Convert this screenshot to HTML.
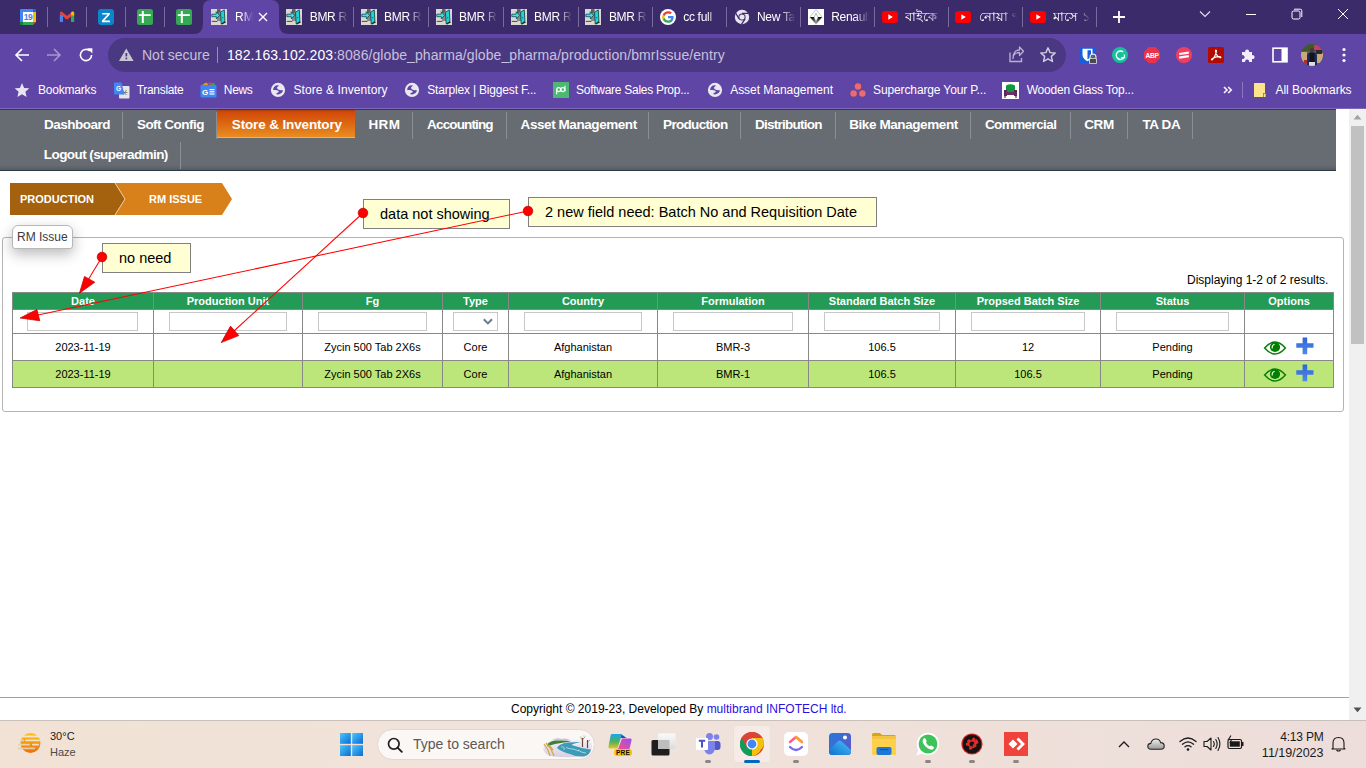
<!DOCTYPE html>
<html><head><meta charset="utf-8">
<style>
*{box-sizing:border-box}
html,body{margin:0;padding:0;width:1366px;height:768px;overflow:hidden;background:#fff;font-family:"Liberation Sans",sans-serif}
.a{position:absolute}
#tabs{left:0;top:0;width:1366px;height:34px;background:#3c2b6b}
#toolbar{left:0;top:34px;width:1366px;height:40px;background:#5f45a5}
#bm{left:0;top:74px;width:1366px;height:35px;background:#5f45a5}
#page{left:0;top:109px;width:1349px;height:611px;background:#fff;overflow:hidden}
#sb{left:1349px;top:109px;width:17px;height:611px;background:#f0f0f0}
#task{left:0;top:720px;width:1366px;height:48px;background:linear-gradient(90deg,#f2e2d5,#f0e3dc 45%,#eee0d9 75%,#eddddb)}
.sep{position:absolute;top:9px;width:1px;height:18px;background:#7a6a9e}
.tt{position:absolute;top:9px;font-size:12px;color:#fff;white-space:nowrap;overflow:hidden;line-height:16px}
.btxt{position:absolute;top:8px;font-size:12px;color:#fff;white-space:nowrap;line-height:18px}
#nav{left:0;top:0;width:1336px;height:62px;background:#676c73;border-top:1px solid #2e3e48;border-bottom:1px solid #2c3b45}
.mi{position:absolute;height:28px;line-height:28px;font-size:13.5px;font-weight:bold;color:#fff;white-space:nowrap}
.ms{position:absolute;width:1px;background:#8a8f95}
.note{position:absolute;background:#ffffd3;border:1px solid #808080;font-size:14.5px;color:#000;line-height:28px;white-space:nowrap}
table.g{position:absolute;left:12px;top:292px;border-collapse:collapse;font-size:11px}
table.g td,table.g th{border:1px solid #888;text-align:center;padding:0}
table.g th{background:#239a55;color:#fff;font-weight:bold;height:17px;line-height:15px}
table.g tr.f td{height:24px;padding:0 15px}
table.g tr.r td{height:27px}
table.g tr.r2 td{background:#bde67a}
.inp{display:block;width:100%;height:19px;border:1px solid #c8c8c8;background:#fff}
</style></head><body>
<!-- TAB STRIP -->
<div id="tabs" class="a">
<div class="sep" style="left:46.8px;top:7px;height:20px"></div>
<div class="sep" style="left:86.0px;top:7px;height:20px"></div>
<div class="sep" style="left:125.0px;top:7px;height:20px"></div>
<div class="sep" style="left:164.2px;top:7px;height:20px"></div>
<svg class="a" style="left:20px;top:9px" width="16" height="16" viewBox="0 0 16 16"><rect x="0" y="0" width="16" height="16" rx="1" fill="#4285f4"/><rect x="13" y="0" width="3" height="3" fill="#1967d2"/><rect x="3" y="3" width="10" height="10" fill="#fff"/><rect x="13" y="3" width="3" height="10" fill="#fbbc04"/><rect x="0" y="13" width="13" height="3" fill="#34a853"/><rect x="0" y="13" width="3" height="3" fill="#188038"/><polygon points="13,13 16,13 13,16" fill="#ea4335"/><polygon points="16,13 16,16 13,16" fill="#3c2b6b"/><text x="8" y="11.4" font-size="8.6" font-weight="bold" fill="#4a80e0" text-anchor="middle" font-family="Liberation Sans" letter-spacing="-0.5">19</text></svg>
<svg class="a" style="left:59px;top:11px" width="16" height="12" viewBox="0 0 16 12"><path d="M2.4 11V3.6" stroke="#4285f4" stroke-width="3.2"/><path d="M13.6 11V3.6" stroke="#34a853" stroke-width="3.2"/><path d="M2.3 2.2L8 6.8L13.7 2.2" fill="none" stroke="#ea4335" stroke-width="3" stroke-linejoin="round" stroke-linecap="round"/><path d="M12.2 1.3A1.6 1.6 0 0 1 15.2 2.3V4.6L12.2 4.6Z" fill="#fbbc04"/></svg>
<svg class="a" style="left:98px;top:9px" width="16" height="16" viewBox="0 0 16 16"><rect width="16" height="16" rx="3" fill="#0b86c8"/><path d="M4.2 4H11.8V5.6L6.3 11.6H11.9V13.2H4V11.6L9.5 5.6H4.2Z" fill="#fff"/></svg>
<svg class="a" style="left:137px;top:9px" width="16" height="16" viewBox="0 0 16 16"><rect width="16" height="16" rx="2.5" fill="#34a853"/><rect x="1.8" y="5.2" width="12" height="1.8" fill="#fff"/><rect x="4.8" y="2" width="2" height="12" fill="#fff"/></svg>
<svg class="a" style="left:176px;top:9px" width="16" height="16" viewBox="0 0 16 16"><rect width="16" height="16" rx="2.5" fill="#34a853"/><rect x="1.8" y="5.2" width="12" height="1.8" fill="#fff"/><rect x="4.8" y="2" width="2" height="12" fill="#fff"/></svg>
<svg class="a" style="left:193px;top:0" width="96" height="34" viewBox="0 0 96 34"><path d="M0 34 Q10 34 10 24 V8 Q10 0 18 0 H78 Q86 0 86 8 V24 Q86 34 96 34 Z" fill="#5f45a5"/></svg>
<svg class="a" style="left:211.0px;top:9px" width="16" height="16" viewBox="0 0 16 16"><rect width="16" height="16" fill="#d9d8d2"/><path d="M6 0.3H10V12H6Z" fill="#8a8a86"/><path d="M6 0.3H9V3L6 5Z" fill="#5c5c58"/><path d="M9.5 3.3L13.3 0.8L13.9 12.4L10.2 14.9Z" fill="#1fd3d6" stroke="#0b3f44" stroke-width="0.8" stroke-linejoin="round"/><path d="M13.9 12.4L15 13.2L11 15.6L10.2 14.9Z" fill="#111"/><circle cx="11.7" cy="8.6" r="0.6" fill="#733"/><path d="M0.8 5.2H5.2V2.7L8.6 6.3L5.4 9.9V7.7H0.8Z" fill="#38e6f0" stroke="#0c3438" stroke-width="0.7" stroke-linejoin="round"/><path d="M0.8 12.4H6.4" stroke="#3a3a3a" stroke-width="0.9"/></svg>
<div class="tt" style="left:235px;width:18px;-webkit-mask-image:linear-gradient(90deg,#000 40%,transparent)">RM Issue</div>
<svg class="a" style="left:258px;top:12px" width="10" height="10" viewBox="0 0 10 10"><path d="M1 1L9 9M9 1L1 9" stroke="#fff" stroke-width="1.4"/></svg>
<svg class="a" style="left:286.2px;top:9px" width="16" height="16" viewBox="0 0 16 16"><rect width="16" height="16" fill="#d9d8d2"/><path d="M6 0.3H10V12H6Z" fill="#8a8a86"/><path d="M6 0.3H9V3L6 5Z" fill="#5c5c58"/><path d="M9.5 3.3L13.3 0.8L13.9 12.4L10.2 14.9Z" fill="#1fd3d6" stroke="#0b3f44" stroke-width="0.8" stroke-linejoin="round"/><path d="M13.9 12.4L15 13.2L11 15.6L10.2 14.9Z" fill="#111"/><circle cx="11.7" cy="8.6" r="0.6" fill="#733"/><path d="M0.8 5.2H5.2V2.7L8.6 6.3L5.4 9.9V7.7H0.8Z" fill="#38e6f0" stroke="#0c3438" stroke-width="0.7" stroke-linejoin="round"/><path d="M0.8 12.4H6.4" stroke="#3a3a3a" stroke-width="0.9"/></svg>
<div class="tt" style="left:309.7px;width:38px;letter-spacing:-0.3px;-webkit-mask-image:linear-gradient(90deg,#000 62%,rgba(0,0,0,.35) 88%,transparent 100%)">BMR Requisition</div>
<div class="sep" style="left:353.0px;top:7px;height:20px"></div>
<svg class="a" style="left:360.5px;top:9px" width="16" height="16" viewBox="0 0 16 16"><rect width="16" height="16" fill="#d9d8d2"/><path d="M6 0.3H10V12H6Z" fill="#8a8a86"/><path d="M6 0.3H9V3L6 5Z" fill="#5c5c58"/><path d="M9.5 3.3L13.3 0.8L13.9 12.4L10.2 14.9Z" fill="#1fd3d6" stroke="#0b3f44" stroke-width="0.8" stroke-linejoin="round"/><path d="M13.9 12.4L15 13.2L11 15.6L10.2 14.9Z" fill="#111"/><circle cx="11.7" cy="8.6" r="0.6" fill="#733"/><path d="M0.8 5.2H5.2V2.7L8.6 6.3L5.4 9.9V7.7H0.8Z" fill="#38e6f0" stroke="#0c3438" stroke-width="0.7" stroke-linejoin="round"/><path d="M0.8 12.4H6.4" stroke="#3a3a3a" stroke-width="0.9"/></svg>
<div class="tt" style="left:384.0px;width:38px;letter-spacing:-0.3px;-webkit-mask-image:linear-gradient(90deg,#000 62%,rgba(0,0,0,.35) 88%,transparent 100%)">BMR Requisition</div>
<div class="sep" style="left:428.1px;top:7px;height:20px"></div>
<svg class="a" style="left:435.6px;top:9px" width="16" height="16" viewBox="0 0 16 16"><rect width="16" height="16" fill="#d9d8d2"/><path d="M6 0.3H10V12H6Z" fill="#8a8a86"/><path d="M6 0.3H9V3L6 5Z" fill="#5c5c58"/><path d="M9.5 3.3L13.3 0.8L13.9 12.4L10.2 14.9Z" fill="#1fd3d6" stroke="#0b3f44" stroke-width="0.8" stroke-linejoin="round"/><path d="M13.9 12.4L15 13.2L11 15.6L10.2 14.9Z" fill="#111"/><circle cx="11.7" cy="8.6" r="0.6" fill="#733"/><path d="M0.8 5.2H5.2V2.7L8.6 6.3L5.4 9.9V7.7H0.8Z" fill="#38e6f0" stroke="#0c3438" stroke-width="0.7" stroke-linejoin="round"/><path d="M0.8 12.4H6.4" stroke="#3a3a3a" stroke-width="0.9"/></svg>
<div class="tt" style="left:459.1px;width:38px;letter-spacing:-0.3px;-webkit-mask-image:linear-gradient(90deg,#000 62%,rgba(0,0,0,.35) 88%,transparent 100%)">BMR Requisition</div>
<div class="sep" style="left:503.1px;top:7px;height:20px"></div>
<svg class="a" style="left:510.6px;top:9px" width="16" height="16" viewBox="0 0 16 16"><rect width="16" height="16" fill="#d9d8d2"/><path d="M6 0.3H10V12H6Z" fill="#8a8a86"/><path d="M6 0.3H9V3L6 5Z" fill="#5c5c58"/><path d="M9.5 3.3L13.3 0.8L13.9 12.4L10.2 14.9Z" fill="#1fd3d6" stroke="#0b3f44" stroke-width="0.8" stroke-linejoin="round"/><path d="M13.9 12.4L15 13.2L11 15.6L10.2 14.9Z" fill="#111"/><circle cx="11.7" cy="8.6" r="0.6" fill="#733"/><path d="M0.8 5.2H5.2V2.7L8.6 6.3L5.4 9.9V7.7H0.8Z" fill="#38e6f0" stroke="#0c3438" stroke-width="0.7" stroke-linejoin="round"/><path d="M0.8 12.4H6.4" stroke="#3a3a3a" stroke-width="0.9"/></svg>
<div class="tt" style="left:534.1px;width:38px;letter-spacing:-0.3px;-webkit-mask-image:linear-gradient(90deg,#000 62%,rgba(0,0,0,.35) 88%,transparent 100%)">BMR Requisition</div>
<div class="sep" style="left:577.9px;top:7px;height:20px"></div>
<svg class="a" style="left:585.4px;top:9px" width="16" height="16" viewBox="0 0 16 16"><rect width="16" height="16" fill="#d9d8d2"/><path d="M6 0.3H10V12H6Z" fill="#8a8a86"/><path d="M6 0.3H9V3L6 5Z" fill="#5c5c58"/><path d="M9.5 3.3L13.3 0.8L13.9 12.4L10.2 14.9Z" fill="#1fd3d6" stroke="#0b3f44" stroke-width="0.8" stroke-linejoin="round"/><path d="M13.9 12.4L15 13.2L11 15.6L10.2 14.9Z" fill="#111"/><circle cx="11.7" cy="8.6" r="0.6" fill="#733"/><path d="M0.8 5.2H5.2V2.7L8.6 6.3L5.4 9.9V7.7H0.8Z" fill="#38e6f0" stroke="#0c3438" stroke-width="0.7" stroke-linejoin="round"/><path d="M0.8 12.4H6.4" stroke="#3a3a3a" stroke-width="0.9"/></svg>
<div class="tt" style="left:608.9px;width:38px;letter-spacing:-0.3px;-webkit-mask-image:linear-gradient(90deg,#000 62%,rgba(0,0,0,.35) 88%,transparent 100%)">BMR Requisition</div>
<div class="sep" style="left:652.2px;top:7px;height:20px"></div>
<svg class="a" style="left:659.7px;top:9px" width="16" height="16" viewBox="0 0 16 16"><circle cx="8" cy="8" r="8" fill="#fff"/><g transform="translate(8 8) scale(1.22) translate(-8 -8)"><path d="M12.6 8.2c0-.4 0-.7-.1-1H8v1.9h2.6c-.1.6-.5 1.1-1 1.5v1.2h1.6c.9-.9 1.4-2.1 1.4-3.6z" fill="#4285f4"/><path d="M8 12.8c1.3 0 2.4-.4 3.2-1.2L9.6 10.4c-.4.3-1 .5-1.6.5-1.3 0-2.3-.8-2.7-2H3.7v1.2C4.5 11.7 6.1 12.8 8 12.8z" fill="#34a853"/><path d="M5.3 8.9c-.2-.6-.2-1.2 0-1.8V5.9H3.7c-.7 1.3-.7 2.9 0 4.2z" fill="#fbbc05"/><path d="M8 5.1c.7 0 1.3.2 1.8.7l1.4-1.4C10.4 3.6 9.2 3.2 8 3.2 6.1 3.2 4.5 4.3 3.7 5.9l1.6 1.2C5.7 5.9 6.7 5.1 8 5.1z" fill="#ea4335"/></g></svg>
<div class="tt" style="left:683.2px;width:38px;letter-spacing:-0.3px;-webkit-mask-image:linear-gradient(90deg,#000 62%,rgba(0,0,0,.35) 88%,transparent 100%)">cc full</div>
<div class="sep" style="left:726.0px;top:7px;height:20px"></div>
<svg class="a" style="left:733.5px;top:9px" width="16" height="16" viewBox="0 0 16 16"><circle cx="8" cy="8" r="7.2" fill="#e8e4f0"/><circle cx="8" cy="8" r="3.6" fill="#3c2b6b"/><circle cx="8" cy="8" r="2.6" fill="#e8e4f0"/><path d="M8 4.4H14.6M5 9.8L1.8 4.2M11.1 9.8L7.6 15.2" stroke="#3c2b6b" stroke-width="1.3"/></svg>
<div class="tt" style="left:757.0px;width:38px;letter-spacing:-0.3px;-webkit-mask-image:linear-gradient(90deg,#000 62%,rgba(0,0,0,.35) 88%,transparent 100%)">New Tab</div>
<div class="sep" style="left:800.2px;top:7px;height:20px"></div>
<svg class="a" style="left:807.7px;top:9px" width="16" height="16" viewBox="0 0 16 16"><rect width="16" height="16" fill="#fff"/><defs><linearGradient id="rn" x1="0" y1="0" x2="0" y2="1"><stop offset="0" stop-color="#000"/><stop offset="1" stop-color="#bbb"/></linearGradient></defs><path d="M8 0.6L14.2 8L8 15.3L1.8 8Z" fill="none" stroke="#aaa" stroke-width="0.7"/><path d="M1.9 8H14.1L8 15.2Z" fill="url(#rn)"/><path d="M8 4.2L10 8.5L8 12.9L6 8.5Z" fill="#fff" stroke="#777" stroke-width="0.5"/></svg>
<div class="tt" style="left:831.2px;width:38px;letter-spacing:-0.3px;-webkit-mask-image:linear-gradient(90deg,#000 62%,rgba(0,0,0,.35) 88%,transparent 100%)">Renault Duster</div>
<div class="sep" style="left:874.0px;top:7px;height:20px"></div>
<svg class="a" style="left:881.5px;top:11px" width="16" height="12" viewBox="0 0 16 12"><rect width="16" height="12" rx="3" fill="#f00"/><path d="M6.3 3.3V8.7L10.8 6Z" fill="#fff"/></svg>
<div class="tt" style="left:905.0px;width:38px;font-size:13px;-webkit-mask-image:linear-gradient(90deg,#000 62%,rgba(0,0,0,.35) 88%,transparent 100%)">বাইকে</div>
<div class="sep" style="left:947.8px;top:7px;height:20px"></div>
<svg class="a" style="left:955.3px;top:11px" width="16" height="12" viewBox="0 0 16 12"><rect width="16" height="12" rx="3" fill="#f00"/><path d="M6.3 3.3V8.7L10.8 6Z" fill="#fff"/></svg>
<div class="tt" style="left:978.8px;width:38px;font-size:13px;-webkit-mask-image:linear-gradient(90deg,#000 62%,rgba(0,0,0,.35) 88%,transparent 100%)">নোয়া ৭</div>
<div class="sep" style="left:1022.0px;top:7px;height:20px"></div>
<svg class="a" style="left:1029.5px;top:11px" width="16" height="12" viewBox="0 0 16 12"><rect width="16" height="12" rx="3" fill="#f00"/><path d="M6.3 3.3V8.7L10.8 6Z" fill="#fff"/></svg>
<div class="tt" style="left:1053.0px;width:38px;font-size:13px;-webkit-mask-image:linear-gradient(90deg,#000 62%,rgba(0,0,0,.35) 88%,transparent 100%)">মাসে ১০</div>
<div class="sep" style="left:1096.2px;top:7px;height:20px"></div>
<svg class="a" style="left:1112px;top:10px" width="14" height="14" viewBox="0 0 14 14"><path d="M7 1V13M1 7H13" stroke="#fff" stroke-width="1.8"/></svg>
<svg class="a" style="left:1199px;top:10px" width="12" height="8" viewBox="0 0 12 8"><path d="M1 1.5L6 6.5L11 1.5" fill="none" stroke="#e4def0" stroke-width="1.1"/></svg>
<div class="a" style="left:1246px;top:14px;width:10px;height:1px;background:#fff"></div>
<svg class="a" style="left:1291px;top:8px" width="12" height="12" viewBox="0 0 12 12"><rect x="1" y="3" width="8" height="8" rx="1.5" fill="none" stroke="#fff" stroke-width="1"/><path d="M3 1.2H9.3Q10.8 1.2 10.8 2.7V9" fill="none" stroke="#fff" stroke-width="1"/></svg>
<svg class="a" style="left:1337px;top:8px" width="12" height="12" viewBox="0 0 12 12"><path d="M1 1L11 11M11 1L1 11" stroke="#fff" stroke-width="1"/></svg>
</div>
<div id="toolbar" class="a"></div>
<svg class="a" style="left:14px;top:47px" width="16" height="16" viewBox="0 0 16 16"><path d="M15 8H2.2M8 2L2 8L8 14" fill="none" stroke="#fff" stroke-width="1.6"/></svg>
<svg class="a" style="left:46px;top:47px" width="16" height="16" viewBox="0 0 16 16"><path d="M1 8H13.8M8 2L14 8L8 14" fill="none" stroke="#a796d0" stroke-width="1.6"/></svg>
<svg class="a" style="left:78px;top:47px" width="16" height="16" viewBox="0 0 16 16"><path d="M13.6 8A5.6 5.6 0 1 1 11.8 3.9" fill="none" stroke="#fff" stroke-width="1.6"/><path d="M9.2 1.2H14.4V6.4Z" fill="#fff"/></svg>
<div class="a" style="left:108px;top:38px;width:958px;height:34px;border-radius:17px;background:#4b3882"></div>
<svg class="a" style="left:118.5px;top:48px" width="15" height="14" viewBox="0 0 15 14"><path d="M7.3 0.5L14.6 13H0Z" fill="#cac6d3"/><rect x="6.5" y="5" width="1.7" height="3.4" fill="#4b3882"/><rect x="6.5" y="9.6" width="1.7" height="1.7" fill="#4b3882"/></svg>
<div class="a" style="left:142px;top:46px;font-size:14px;line-height:18px;color:#c6c0d4;letter-spacing:0px">Not secure</div>
<div class="a" style="left:217px;top:47px;width:1px;height:16px;background:#9a8cc0"></div>
<div class="a" style="left:227px;top:46px;font-size:14px;line-height:18px;color:#c9c0dd;white-space:nowrap;letter-spacing:0.07px"><span style="color:#fff">182.163.102.203</span>:8086/globe_pharma/globe_pharma/production/bmrIssue/entry</div>
<svg class="a" style="left:1007px;top:46px" width="18" height="18" viewBox="0 0 18 18"><path d="M3 6.5V15.5H14.5V12" fill="none" stroke="#b9afd3" stroke-width="1.4"/><path d="M6 12.5C6 8.5 8.5 6.5 12.5 6.5V9.5L16.5 5.2L12.5 1V4C8 4 6 7.5 6 12.5Z" fill="none" stroke="#b9afd3" stroke-width="1.3" stroke-linejoin="round"/></svg>
<svg class="a" style="left:1039px;top:46px" width="18" height="18" viewBox="0 0 18 18"><path d="M9 1.8L11.1 6.6L16.2 7L12.3 10.4L13.5 15.5L9 12.8L4.5 15.5L5.7 10.4L1.8 7L6.9 6.6Z" fill="none" stroke="#d6d0e4" stroke-width="1.4" stroke-linejoin="round"/></svg>
<svg class="a" style="left:1080px;top:47px" width="17" height="17" viewBox="0 0 17 17"><rect x="0" y="0" width="15" height="16" fill="#175ddc"/><path d="M2.5 1.8H12.5V8C12.5 11 10 13 7.5 14.2C5 13 2.5 11 2.5 8Z" fill="#fff"/><path d="M7.5 3.2H11V8C11 10 9.5 11.4 7.5 12.5Z" fill="#175ddc"/><path d="M10.7 11.2V9.9A2.3 2.3 0 0 1 15.3 9.9V11.2" fill="none" stroke="#e8e8e8" stroke-width="2.4"/><path d="M11.2 11.5V10A1.8 1.8 0 0 1 14.8 10V11.5" fill="none" stroke="#4a4a4a" stroke-width="1.1"/><rect x="9.2" y="11" width="7.6" height="6" rx="1" fill="#e8e8e8"/><rect x="10" y="11.8" width="6" height="4.4" rx="0.5" fill="#4a4a4a"/></svg>
<svg class="a" style="left:1112px;top:47px" width="16" height="16" viewBox="0 0 16 16"><circle cx="8" cy="8" r="8" fill="#15c39a"/><path d="M11.2 5.1A4.2 4.2 0 1 0 12 10.4" fill="none" stroke="#fff" stroke-width="1.4"/><path d="M9.2 10.6H12.4V7.6" fill="none" stroke="#fff" stroke-width="1.3"/></svg>
<svg class="a" style="left:1144px;top:47px" width="16" height="16" viewBox="0 0 16 16"><path d="M4.7 0H11.3L16 4.7V11.3L11.3 16H4.7L0 11.3V4.7Z" fill="#e8334a"/><text x="8" y="10.8" font-size="6.6" font-weight="bold" fill="#fff" text-anchor="middle" font-family="Liberation Sans" letter-spacing="-0.3">ABP</text></svg>
<svg class="a" style="left:1176px;top:47px" width="16" height="16" viewBox="0 0 16 16"><circle cx="8" cy="8" r="8" fill="#f23e5c"/><path d="M3.2 7L12.8 5.6M3.2 10.6L12.8 9.2" stroke="#fff" stroke-width="2.2"/></svg>
<svg class="a" style="left:1208px;top:47px" width="16" height="16" viewBox="0 0 16 16"><rect width="16" height="16" rx="1.5" fill="#b30b00"/><path d="M8 3C7 3 7.6 6.5 9.8 9.3C11.6 11.2 13.2 10.9 12.8 10C12.3 9 8.5 9.5 5 11.2C3 12.2 3.3 13.5 4.2 12.8C5.6 11.6 8.5 6.2 8.5 4C8.5 3.3 8.3 3 8 3Z" fill="none" stroke="#fff" stroke-width="1.1"/></svg>
<svg class="a" style="left:1240px;top:47px" width="16" height="16" viewBox="0 0 16 16"><path d="M2 5H5.2A2 2 0 1 1 9 5H12V8.2A2 2 0 1 1 12 12V15H9A2 2 0 1 0 5.2 15H2V12A2 2 0 1 0 2 8.2Z" fill="#f1eef7"/></svg>
<svg class="a" style="left:1272px;top:47px" width="16" height="16" viewBox="0 0 16 16"><rect x="1" y="1.2" width="14" height="13.6" fill="none" stroke="#fff" stroke-width="1.6"/><rect x="9.5" y="1.2" width="5.5" height="13.6" fill="#fff"/></svg>
<svg class="a" style="left:1301px;top:44px" width="22" height="22" viewBox="0 0 22 22"><defs><clipPath id="av"><circle cx="11" cy="11" r="11"/></clipPath></defs><g clip-path="url(#av)"><rect width="22" height="22" fill="#6a5a48"/><rect x="0" y="0" width="22" height="7" fill="#3f5a2a"/><rect x="13" y="1" width="8" height="5" fill="#c0406a"/><rect x="0" y="8" width="6" height="10" fill="#c8a878"/><rect x="15" y="9" width="7" height="10" fill="#c8aa7a"/><rect x="15" y="6" width="6" height="4" fill="#2a2a30"/><circle cx="11" cy="6" r="2.3" fill="#4a3a35"/><path d="M6 22V11Q7 8 11 8Q15 8 16 11V22Z" fill="#1c2a66"/><path d="M8.5 9H13.5V19H8.5Z" fill="#151515"/><rect x="8" y="18" width="6" height="4" fill="#ddd"/><rect x="3" y="16" width="3" height="3" fill="#b03030"/></g></svg>
<svg class="a" style="left:1341px;top:47px" width="6" height="16" viewBox="0 0 6 16"><circle cx="3" cy="2.5" r="1.6" fill="#fff"/><circle cx="3" cy="8" r="1.6" fill="#fff"/><circle cx="3" cy="13.5" r="1.6" fill="#fff"/></svg>

<div id="bm" class="a"></div>
<div class="a" style="left:0;top:108px;width:1366px;height:1px;background:#7e67ba"></div>
<svg class="a" style="left:14px;top:82px" width="16" height="16" viewBox="0 0 16 16"><path d="M8 1L10.1 5.9L15.3 6.3L11.4 9.8L12.6 14.9L8 12.2L3.4 14.9L4.6 9.8L0.7 6.3L5.9 5.9Z" fill="#e8e4f2"/></svg>
<div class="btxt" style="left:37.9px;top:81px;letter-spacing:-0.19px">Bookmarks</div>
<svg class="a" style="left:113px;top:82px" width="17" height="17" viewBox="0 0 17 17"><rect x="6" y="4" width="10.5" height="12.5" rx="1" fill="#e6e6e6"/><path d="M9 8L13.5 13M13.5 8L10 12.5M8.5 10.5H14.5" stroke="#7a7a7a" stroke-width="0.9"/><path d="M1 0.5H8.5L11.5 12.5H2A1 1 0 0 1 1 11.5Z" fill="#4285f4"/><text x="5.5" y="8.8" font-size="6.5" font-weight="bold" fill="#fff" text-anchor="middle" font-family="Liberation Sans">G</text></svg>
<div class="btxt" style="left:136.8px;top:81px;letter-spacing:-0.33px">Translate</div>
<svg class="a" style="left:200px;top:81px" width="17" height="17" viewBox="0 0 17 17"><path d="M2 3.5L7 1.5L8 4Z" fill="#fbbc04"/><path d="M9 4L14 1.5L15 4Z" fill="#34a853"/><path d="M5 3L11 1.2L12 3.5Z" fill="#ea4335"/><rect x="0.5" y="4" width="16" height="12.5" rx="1.2" fill="#4285f4"/><text x="5" y="13.8" font-size="8" font-weight="bold" fill="#fff" text-anchor="middle" font-family="Liberation Sans">G</text><rect x="9.5" y="8" width="5" height="1.2" fill="#fff"/><rect x="9.5" y="10.2" width="5" height="1.2" fill="#fff"/><rect x="9.5" y="12.4" width="5" height="1.2" fill="#fff"/></svg>
<div class="btxt" style="left:223.8px;top:81px;letter-spacing:-0.33px">News</div>
<svg class="a" style="left:268px;top:80px" width="20" height="20" viewBox="0 0 20 20"><circle cx="10" cy="9.9" r="7.1" fill="#e9e7ef"/><path d="M5.2 9.1L6 7L7.8 5.6L10.7 5.2L10.4 6.25L9.1 7.3L9 8.3L10.2 9.4L11.5 9.9L12.8 10.3L14.6 10L14.7 11.5L13.5 13L11.2 14.2L8.9 14.5L8.3 13.3L10.2 12.5L10.9 11.5L9.9 10.4L7.8 9.9L5.2 9.9Z" fill="#5f45a5"/></svg>
<div class="btxt" style="left:293.5px;top:81px;letter-spacing:0.08px">Store &amp; Inventory</div>
<svg class="a" style="left:402px;top:80px" width="20" height="20" viewBox="0 0 20 20"><circle cx="10" cy="9.9" r="7.1" fill="#e9e7ef"/><path d="M5.2 9.1L6 7L7.8 5.6L10.7 5.2L10.4 6.25L9.1 7.3L9 8.3L10.2 9.4L11.5 9.9L12.8 10.3L14.6 10L14.7 11.5L13.5 13L11.2 14.2L8.9 14.5L8.3 13.3L10.2 12.5L10.9 11.5L9.9 10.4L7.8 9.9L5.2 9.9Z" fill="#5f45a5"/></svg>
<div class="btxt" style="left:427.2px;top:81px;letter-spacing:-0.18px">Starplex | Biggest F...</div>
<svg class="a" style="left:553px;top:82px" width="16" height="16" viewBox="0 0 16 16"><rect width="16" height="16" fill="#4cb874"/><g fill="none" stroke="#f2fff6" stroke-width="1.25"><path d="M3.6 7.4V12.3"/><circle cx="5.7" cy="7.6" r="2"/><circle cx="9.8" cy="7.6" r="2"/><path d="M11.9 3.7V9.2"/></g></svg>
<div class="btxt" style="left:576.1px;top:81px;letter-spacing:-0.28px">Software Sales Prop...</div>
<svg class="a" style="left:705px;top:80px" width="20" height="20" viewBox="0 0 20 20"><circle cx="10" cy="9.9" r="7.1" fill="#e9e7ef"/><path d="M5.2 9.1L6 7L7.8 5.6L10.7 5.2L10.4 6.25L9.1 7.3L9 8.3L10.2 9.4L11.5 9.9L12.8 10.3L14.6 10L14.7 11.5L13.5 13L11.2 14.2L8.9 14.5L8.3 13.3L10.2 12.5L10.9 11.5L9.9 10.4L7.8 9.9L5.2 9.9Z" fill="#5f45a5"/></svg>
<div class="btxt" style="left:730.2px;top:81px;letter-spacing:-0.04px">Asset Management</div>
<svg class="a" style="left:850px;top:82px" width="16" height="16" viewBox="0 0 16 16"><circle cx="8" cy="4.5" r="3.2" fill="#f06a6a"/><circle cx="3.6" cy="11.5" r="3.2" fill="#f06a6a"/><circle cx="12.4" cy="11.5" r="3.2" fill="#f06a6a"/></svg>
<div class="btxt" style="left:873.1px;top:81px;letter-spacing:-0.13px">Supercharge Your P...</div>
<svg class="a" style="left:1002px;top:82px" width="17" height="17" viewBox="0 0 17 17"><rect width="17" height="17" fill="#fff"/><path d="M4 3.5Q8.5 1 13 3.5V10H4Z" fill="#0e9a3a"/><rect x="2" y="8" width="3" height="6" fill="#5a2a5a"/><rect x="12" y="8" width="3" height="6" fill="#5a2a5a"/><rect x="4" y="10" width="9" height="3" fill="#6b2f6b"/><path d="M3 14V16M14 14V16" stroke="#5a2a5a" stroke-width="1.2"/></svg>
<div class="btxt" style="left:1026.7px;top:81px;letter-spacing:-0.2px">Wooden Glass Top...</div>
<svg class="a" style="left:1223px;top:86px" width="10" height="8" viewBox="0 0 10 8"><path d="M1 1L4 4L1 7M5.2 1L8.2 4L5.2 7" fill="none" stroke="#f4f2f8" stroke-width="1.7"/></svg>
<div class="a" style="left:1242px;top:82px;width:1px;height:16px;background:#8a78bb"></div>
<svg class="a" style="left:1254px;top:83px" width="12" height="14" viewBox="0 0 12 14"><path d="M0 0.6Q0 0 0.6 0H10.4Q11 0 11 0.6V10H9.6Q9 10 9 10.6V14H0.6Q0 14 0 13.4Z" fill="#fde38a"/><path d="M9.6 10.6H11.6V14H9.6Z" fill="#fde38a"/></svg>
<div class="btxt" style="left:1275.5px;top:81px;letter-spacing:-0.05px">All Bookmarks</div>

<div id="page" class="a">

  <svg class="a" style="left:0;top:74px" width="240" height="32">
    <polygon points="10,0 115,0 125,16 115,32 10,32" fill="#a4620f"/>
    <polygon points="115,0 222,0 232,16 222,32 115,32 125,16" fill="#d8801a"/>
    <polyline points="115,0 125,16 115,32" fill="none" stroke="#f3d9b0" stroke-width="0.8"/>
  </svg>
  <div class="a" style="left:20px;top:74px;height:32px;line-height:32px;font-size:11px;font-weight:bold;color:#fff">PRODUCTION</div>
  <div class="a" style="left:149px;top:74px;height:32px;line-height:32px;font-size:11px;font-weight:bold;color:#fff">RM ISSUE</div>
  <div class="a" style="left:2px;top:128px;width:1342px;height:175px;border:1px solid #b4b4b4;border-radius:3px"></div>
  <div class="a" style="left:12px;top:116px;width:61px;height:24px;border:1px solid #b8b8b8;border-radius:6px 6px 3px 3px;background:#fff;box-shadow:0 5px 14px rgba(0,0,0,0.28);font-size:12px;line-height:23px;color:#3a3a3a;padding-left:4px">RM Issue</div>
  <div class="a" style="left:1187px;top:164px;font-size:12px;line-height:15px;color:#000">Displaying 1-2 of 2 results.</div>
  <table class="g" style="top:183px">
   <tr><th style="width:141px">Date</th><th style="width:149px">Production Unit</th><th style="width:140px">Fg</th><th style="width:66px">Type</th><th style="width:149px">Country</th><th style="width:151px">Formulation</th><th style="width:147px">Standard Batch Size</th><th style="width:145px">Propsed Batch Size</th><th style="width:144px">Status</th><th style="width:89px">Options</th></tr>
   <tr class="f"><td style="padding:0 15px 0 14px"><span class="inp"></span></td><td><span class="inp"></span></td><td><span class="inp"></span></td><td style="padding:0 10px"><span class="inp sel"></span></td><td><span class="inp"></span></td><td><span class="inp"></span></td><td><span class="inp"></span></td><td><span class="inp"></span></td><td><span class="inp"></span></td><td></td></tr>
   <tr class="r"><td>2023-11-19</td><td></td><td>Zycin 500 Tab 2X6s</td><td>Core</td><td>Afghanistan</td><td>BMR-3</td><td>106.5</td><td>12</td><td>Pending</td><td class="opt"></td></tr>
   <tr class="r r2"><td>2023-11-19</td><td></td><td>Zycin 500 Tab 2X6s</td><td>Core</td><td>Afghanistan</td><td>BMR-1</td><td>106.5</td><td>106.5</td><td>Pending</td><td class="opt"></td></tr>
  </table>
  <div class="a" style="left:0;top:588px;width:1349px;height:1px;background:#a0a0a0"></div>
  <div class="a" style="left:511px;top:593px;font-size:12px;line-height:15px;color:#000;white-space:nowrap">Copyright © 2019-23, Developed By <span style="color:#2a10e4">multibrand INFOTECH ltd.</span></div>
  <div id="nav" class="a">
<div class="a" style="left:0;top:55px;width:1336px;height:5px;background:linear-gradient(rgba(0,0,0,0),rgba(0,0,0,.16))"></div>
<div class="mi" style="left:43.9px;top:1px;letter-spacing:-0.50px">Dashboard</div>
<div class="ms" style="left:122px;top:2px;height:27px"></div>
<div class="mi" style="left:136.9px;top:1px;letter-spacing:-0.52px">Soft Config</div>
<div class="mi" style="left:368.5px;top:1px;letter-spacing:0.33px">HRM</div>
<div class="ms" style="left:412px;top:2px;height:27px"></div>
<div class="mi" style="left:427.1px;top:1px;letter-spacing:-0.86px">Accounting</div>
<div class="ms" style="left:506px;top:2px;height:27px"></div>
<div class="mi" style="left:520.6px;top:1px;letter-spacing:-0.43px">Asset Management</div>
<div class="ms" style="left:648px;top:2px;height:27px"></div>
<div class="mi" style="left:663.1px;top:1px;letter-spacing:-0.69px">Production</div>
<div class="ms" style="left:740px;top:2px;height:27px"></div>
<div class="mi" style="left:754.9px;top:1px;letter-spacing:-0.75px">Distribution</div>
<div class="ms" style="left:835px;top:2px;height:27px"></div>
<div class="mi" style="left:849.2px;top:1px;letter-spacing:-0.41px">Bike Management</div>
<div class="ms" style="left:970px;top:2px;height:27px"></div>
<div class="mi" style="left:984.9px;top:1px;letter-spacing:-0.58px">Commercial</div>
<div class="ms" style="left:1070px;top:2px;height:27px"></div>
<div class="mi" style="left:1084.2px;top:1px;letter-spacing:-0.32px">CRM</div>
<div class="ms" style="left:1127px;top:2px;height:27px"></div>
<div class="mi" style="left:1142.4px;top:1px;letter-spacing:-0.37px">TA DA</div>
<div class="ms" style="left:1192px;top:2px;height:27px"></div>
<div class="ms" style="left:216px;top:2px;height:27px"></div>
<div class="a" style="left:217px;top:0px;width:138px;height:28px;background:linear-gradient(#a8400a,#d2490a 2px,#d9600f 40%,#e98d20);border-bottom:1px solid #f4ad5c"></div>
<div class="mi" style="left:231.8px;top:1px;letter-spacing:-0.14px">Store &amp; Inventory</div>
<div class="mi" style="left:43.8px;top:31px;letter-spacing:-0.58px">Logout (superadmin)</div>
<div class="ms" style="left:180px;top:32px;height:27px"></div>
</div>
</div>

<div class="note" style="left:102px;top:243px;width:89px;height:30px;padding-left:16px">no need</div>
<div class="note" style="left:363px;top:199px;width:147px;height:30px;padding-left:16px">data not showing</div>
<div class="note" style="left:528px;top:197px;width:349px;height:30px;padding-left:16px">2 new field need: Batch No and Requisition Date</div>
<svg class="a" style="left:0;top:0" width="1366" height="768">
 <g stroke="#ff0000" stroke-width="1.05" fill="none">
  <line x1="102" y1="257" x2="88" y2="280"/>
  <line x1="528" y1="211" x2="38" y2="315"/>
  <line x1="363" y1="213" x2="234" y2="331"/>
 </g>
 <g fill="#ff0000" stroke="#b80000" stroke-width="0.7">
  <circle cx="102" cy="257" r="4.8"/>
  <circle cx="363" cy="213" r="4.8"/>
  <circle cx="528" cy="211" r="4.8"/>
  <polygon points="79.4,293.3 84.5,276.4 94.8,282.2"/>
  <polygon points="20.1,318 36.9,309.5 39.8,320.8"/>
  <polygon points="221.2,342.6 230.5,326.1 238.8,335.6"/>
 </g>
</svg>
<svg class="a" style="left:1263px;top:339.8px" width="24" height="16" viewBox="0 0 24 16"><path d="M1.6 8Q12 -4 22.4 8Q12 20 1.6 8Z" fill="none" stroke="#0b7d0b" stroke-width="1.5"/><circle cx="12" cy="7" r="5.1" fill="#008000"/><path d="M9.2 8.5Q8.8 5 11.6 4.2" fill="none" stroke="#fff" stroke-width="1.1"/></svg>
<svg class="a" style="left:1263px;top:366.8px" width="24" height="16" viewBox="0 0 24 16"><path d="M1.6 8Q12 -4 22.4 8Q12 20 1.6 8Z" fill="none" stroke="#0b7d0b" stroke-width="1.5"/><circle cx="12" cy="7" r="5.1" fill="#008000"/><path d="M9.2 8.5Q8.8 5 11.6 4.2" fill="none" stroke="#fff" stroke-width="1.1"/></svg>
<svg class="a" style="left:1296px;top:337px" width="18" height="18" viewBox="0 0 18 18"><defs><linearGradient id="pl337" x1="0" y1="0" x2="0" y2="1"><stop offset="0" stop-color="#2f63d8"/><stop offset="1" stop-color="#4f8ae8"/></linearGradient></defs><path d="M6.6 0.5H11.2V6.2H17.5V10.7H11.2V17.2H6.6V10.7H0.3V6.2H6.6Z" fill="url(#pl337)"/></svg>
<svg class="a" style="left:1296px;top:364px" width="18" height="18" viewBox="0 0 18 18"><defs><linearGradient id="pl364" x1="0" y1="0" x2="0" y2="1"><stop offset="0" stop-color="#2f63d8"/><stop offset="1" stop-color="#4f8ae8"/></linearGradient></defs><path d="M6.6 0.5H11.2V6.2H17.5V10.7H11.2V17.2H6.6V10.7H0.3V6.2H6.6Z" fill="url(#pl364)"/></svg>
<svg class="a" style="left:482px;top:317px" width="12" height="9" viewBox="0 0 12 9"><path d="M1.8 2.2L5.9 6.4L10 2.2" fill="none" stroke="#6b7b8b" stroke-width="2"/></svg>
<div id="sb" class="a">
<svg class="a" style="left:4px;top:5px" width="9" height="6" viewBox="0 0 9 6"><path d="M0.5 5.5L4.5 0.8L8.5 5.5Z" fill="#a3a3a3"/></svg>
<div class="a" style="left:2px;top:17px;width:13px;height:218px;background:#c1c1c1"></div>
<svg class="a" style="left:4px;top:598px" width="9" height="6" viewBox="0 0 9 6"><path d="M0.5 0.5L4.5 5.2L8.5 0.5Z" fill="#505050"/></svg>
</div>
<div id="task" class="a"></div>
<div class="a" style="left:0;top:720px;width:1366px;height:1px;background:#c9bfbb"></div>
<svg class="a" style="left:18px;top:732px" width="26" height="22" viewBox="0 0 26 22"><defs><linearGradient id="sun" x1="0" y1="0" x2="0" y2="1"><stop offset="0" stop-color="#f9c21a"/><stop offset="1" stop-color="#ef6d0b"/></linearGradient></defs><circle cx="12.5" cy="11" r="10" fill="url(#sun)"/><rect x="4" y="3.5" width="18" height="2" rx="1" fill="#f3e6c8"/><rect x="2" y="7.5" width="4" height="1.8" rx="0.9" fill="#e7d6b0"/><rect x="7" y="7.5" width="15" height="1.8" rx="0.9" fill="#f0e2c4"/><rect x="0" y="11.8" width="12" height="1.8" rx="0.9" fill="#e5d3ad"/><rect x="14" y="11.8" width="7" height="1.8" rx="0.9" fill="#efe0c0"/><rect x="0" y="15.5" width="17" height="1.8" rx="0.9" fill="#e0cfa8"/></svg>
<div class="a" style="left:50px;top:729px;font-size:11px;line-height:15px;color:#1a1a1a">30°C</div>
<div class="a" style="left:50px;top:745px;font-size:11px;line-height:15px;color:#4a4a4a">Haze</div>
<svg class="a" style="left:340px;top:733px" width="23" height="23" viewBox="0 0 23 23"><defs><linearGradient id="win" x1="0" y1="0" x2="1" y2="1"><stop offset="0" stop-color="#4cc6f9"/><stop offset="1" stop-color="#0a6ad6"/></linearGradient></defs><rect x="0" y="0" width="10.8" height="10.8" fill="url(#win)"/><rect x="12.2" y="0" width="10.8" height="10.8" fill="url(#win)"/><rect x="0" y="12.2" width="10.8" height="10.8" fill="url(#win)"/><rect x="12.2" y="12.2" width="10.8" height="10.8" fill="url(#win)"/></svg>
<div class="a" style="left:377px;top:729px;width:218px;height:31px;border-radius:16px;background:#fbf7f5;border:1px solid #e2d8d3"></div>
<svg class="a" style="left:387px;top:737px" width="16" height="16" viewBox="0 0 16 16"><circle cx="6.8" cy="6.8" r="5.3" fill="none" stroke="#1f1f1f" stroke-width="1.7"/><path d="M10.6 10.6L14.8 14.8" stroke="#1f1f1f" stroke-width="1.9" stroke-linecap="round"/></svg>
<div class="a" style="left:413px;top:736px;font-size:14px;line-height:16px;color:#5d5856">Type to search</div>
<svg class="a" style="left:540px;top:728px" width="56" height="32" viewBox="0 0 56 32"><defs><linearGradient id="snow" x1="0" y1="0" x2="0" y2="1"><stop offset="0" stop-color="#f4f2f8"/><stop offset="1" stop-color="#d9cfe0"/></linearGradient></defs><path d="M3.5 22Q3 15 10 13Q20 10 32 12Q46 11 52 15Q53 24 46 28Q30 30 14 28.5Q4 27 3.5 22Z" fill="url(#snow)"/><path d="M12 12Q17 9 22 11Q26 9.5 31 12.5Z" fill="#c9c0e0"/><path d="M7 17Q10 12 18 12.5Q25 12 31 13.5Q22 14.5 15 16Q10 17 8 19Z" fill="#3f7f3a"/><path d="M17 20Q19 15.5 28 14.5Q35 13.8 41 14Q33 15.5 31.5 17Q40 20 51 21.5Q50 27 44 28.5Q36 29 30 26Q22 24 17 20Z" fill="#3c9bb6"/><path d="M21 19Q25 18 24 22M26 19.5Q29 21 33 21Q36 22 39 23M38 22Q42 25 46 25" stroke="#d6eef3" stroke-width="0.7" fill="none"/><path d="M4 16L8 22L10 28M6 15L11 21L14 28M9 17L13 22" stroke="#d4a84e" stroke-width="1.3" fill="none"/><path d="M42.5 19V10M47.5 20V12" stroke="#6b4430" stroke-width="1.2"/><path d="M42.5 12L40 9M42.5 12L45 8.5M47.5 14L50 12" stroke="#8a6a5a" stroke-width="0.7"/><circle cx="41" cy="9" r="1" fill="#ddd"/><circle cx="44" cy="8" r="1" fill="#ddd"/></svg>
<svg class="a" style="left:604px;top:728px" width="32" height="32" viewBox="0 0 32 32"><defs><linearGradient id="cp1" x1="0" y1="0" x2="0" y2="1"><stop offset="0" stop-color="#1aa6e8"/><stop offset="0.55" stop-color="#53b05a"/><stop offset="1" stop-color="#e8c818"/></linearGradient><linearGradient id="cp2" x1="1" y1="0" x2="0" y2="1"><stop offset="0" stop-color="#9a4ef0"/><stop offset="1" stop-color="#f0508a"/></linearGradient></defs><path d="M17 6L22.5 10H16Z" fill="#1b4fd0"/><path d="M7.5 6H18L13.5 20.5H5.5Q4 20.5 4.5 18.5L6.5 8Q7 6 7.5 6Z" fill="url(#cp1)"/><path d="M18 10.5H26.5Q28 10.5 27.5 12.5L25.5 21H14Z" fill="url(#cp2)"/><rect x="10" y="21" width="18" height="7" rx="3" fill="#fcc400"/><text x="19" y="27" font-size="6.5" font-weight="bold" fill="#111" text-anchor="middle" font-family="Liberation Sans" letter-spacing="0.2">PRE</text></svg>
<svg class="a" style="left:651px;top:733px" width="25" height="23" viewBox="0 0 25 23"><defs><linearGradient id="tv" x1="0" y1="0" x2="0" y2="1"><stop offset="0" stop-color="#fafafa"/><stop offset="1" stop-color="#dcdcdc"/></linearGradient></defs><rect x="0.5" y="7" width="18" height="15.5" rx="1.5" fill="#1e1e1e"/><rect x="7" y="0.5" width="17.5" height="15.5" rx="1.5" fill="url(#tv)"/><rect x="7" y="7" width="11.5" height="9" fill="#bdbdbd"/></svg>
<svg class="a" style="left:696px;top:733px" width="25" height="22" viewBox="0 0 25 22"><circle cx="20.5" cy="4" r="2.8" fill="#7b83eb"/><rect x="17" y="8" width="7.5" height="9" rx="3" fill="#5059c9"/><circle cx="13.5" cy="3.5" r="3.5" fill="#7b83eb"/><path d="M8 8H19V15A5.5 6.5 0 0 1 8 15Z" fill="#7b83eb"/><rect x="0" y="5" width="12" height="12" rx="1" fill="#fff"/><path d="M2.8 7.8H9.2M6 7.8V14.5" stroke="#4b53bc" stroke-width="2"/></svg>
<div class="a" style="left:705px;top:760px;width:6px;height:3px;border-radius:2px;background:#8b8583"></div>
<div class="a" style="left:733px;top:725px;width:38px;height:38px;border-radius:4px;background:#f6ebe7;border:1px solid #ece0dc"></div>
<svg class="a" style="left:740px;top:732px" width="24" height="24" viewBox="0 0 24 24"><circle cx="12" cy="12" r="12" fill="#db4437"/><path d="M12 12L1.6 6A12 12 0 0 0 12 24Z" fill="#0f9d58"/><path d="M12 12H22.4A12 12 0 0 1 12 24Z" fill="#f4c20d"/><path d="M12 6H22.4A12 12 0 0 1 24 12L22 17L12 12Z" fill="#f4c20d"/><path d="M12 12L6.8 3A12 12 0 0 0 1.6 6L1.6 18Z" fill="#0f9d58"/><path d="M12 6H22.4A12 12 0 0 0 1.6 6L6.8 15Z" fill="#db4437"/><path d="M12 12L12 24L22.4 6H12Z" fill="#f4c20d"/><circle cx="12" cy="12" r="5.6" fill="#fff"/><circle cx="12" cy="12" r="4.4" fill="#4285f4"/></svg>
<div class="a" style="left:744px;top:760px;width:16px;height:3px;border-radius:2px;background:#0067c0"></div>
<svg class="a" style="left:784px;top:732px" width="24" height="24" viewBox="0 0 24 24"><rect width="24" height="24" rx="5" fill="#fff"/><path d="M6 10L12 5L18 10" fill="none" stroke="#ff5a8a" stroke-width="2.4" stroke-linecap="round" stroke-linejoin="round"/><path d="M6 15Q12 21 18 15" fill="none" stroke="#7b68ee" stroke-width="2.4" stroke-linecap="round"/><path d="M12 5L18 10" stroke="#ffa12f" stroke-width="2.4" stroke-linecap="round"/></svg>
<div class="a" style="left:793px;top:760px;width:6px;height:3px;border-radius:2px;background:#8b8583"></div>
<svg class="a" style="left:829px;top:733px" width="22" height="22" viewBox="0 0 22 22"><defs><linearGradient id="ph" x1="0" y1="0" x2="1" y2="1"><stop offset="0" stop-color="#1f7ddb"/><stop offset="1" stop-color="#6a4fc8"/></linearGradient><linearGradient id="ph2" x1="0" y1="1" x2="1" y2="0"><stop offset="0" stop-color="#0e6fd0"/><stop offset="1" stop-color="#49c3f5"/></linearGradient></defs><rect width="22" height="22" rx="3.5" fill="url(#ph)"/><circle cx="16" cy="4.5" r="2" fill="#fff"/><path d="M0 17L9 8Q10.5 7 12 8L22 17V18.5Q22 22 18.5 22H3.5Q0 22 0 18.5Z" fill="url(#ph2)"/></svg>
<svg class="a" style="left:872px;top:733px" width="24" height="22" viewBox="0 0 24 22"><path d="M0 1.5Q0 0 1.5 0H8L10 2H22.5Q24 2 24 3.5V6H0Z" fill="#d8a21a"/><rect x="0" y="3" width="24" height="19" rx="1" fill="#fccf4d"/><rect x="0" y="3" width="24" height="3" fill="#f2c440"/><rect x="4.5" y="14" width="15" height="8" rx="2" fill="#1c78d4"/><rect x="8" y="16" width="8" height="1.2" fill="#0a58b0"/></svg>
<svg class="a" style="left:916px;top:732px" width="24" height="24" viewBox="0 0 24 24"><path d="M12 0.8A11.2 11.2 0 0 1 12 23.2Q8.5 23.2 5.8 21.6L0.4 23.4L2.2 18.2Q0.8 15.3 0.8 12A11.2 11.2 0 0 1 12 0.8Z" fill="#fff"/><circle cx="12" cy="12" r="9.4" fill="#3ec35a"/><path d="M7.5 6.5Q8.5 5.8 9.3 6.2L10.6 9Q10.8 9.7 10 10.5Q11 13 13.7 14.2Q14.5 13.4 15.1 13.5L17.8 14.9Q18.2 15.8 17.5 16.8Q16.2 18 14.6 17.6Q9.5 16 6.8 10.5Q6.2 8 7.5 6.5Z" fill="#fff"/></svg>
<div class="a" style="left:925px;top:760px;width:6px;height:3px;border-radius:2px;background:#8b8583"></div>
<svg class="a" style="left:961px;top:733px" width="22" height="22" viewBox="0 0 22 22"><circle cx="11" cy="11" r="10.6" fill="#d92626"/><circle cx="11" cy="11" r="9.4" fill="#161212"/><path d="M6 8L8 6L9.5 7.3L11 6.5L12 4.5L14 5L13.8 7.4L15.5 9L17 7.5L17.5 10L15.3 11.3L15.5 13.3L13.2 14.8L11.3 15.3L10 17L8 16L8.5 14L7 12.8L5 12.5L4.7 10.3L6.5 9.7Z" fill="#e42b2b"/><circle cx="11" cy="11" r="2.5" fill="#161212"/><path d="M12 13L16 7M16 7H13.5M16 7V9.5" stroke="#e42b2b" stroke-width="1.3" fill="none"/></svg>
<div class="a" style="left:969px;top:760px;width:6px;height:3px;border-radius:2px;background:#8b8583"></div>
<svg class="a" style="left:1004px;top:732px" width="24" height="24" viewBox="0 0 24 24"><rect width="24" height="24" fill="#ef443b"/><path d="M4.5 12L9 7.5L13.5 12L9 16.5Z" fill="#fff"/><path d="M12.5 7.5L14.5 5.5L21 12L14.5 18.5L12.5 16.5L17 12Z" fill="#fff"/></svg>
<div class="a" style="left:1013px;top:760px;width:6px;height:3px;border-radius:2px;background:#8b8583"></div>
<svg class="a" style="left:1118px;top:740px" width="12" height="8" viewBox="0 0 12 8"><path d="M1 7L6 2L11 7" fill="none" stroke="#1a1a1a" stroke-width="1.3"/></svg>
<svg class="a" style="left:1147px;top:738px" width="18" height="12" viewBox="0 0 18 12"><defs><linearGradient id="cl" x1="0" y1="0" x2="0" y2="1"><stop offset="0" stop-color="#f0f0f0"/><stop offset="1" stop-color="#9a9a9a"/></linearGradient></defs><path d="M4 11.2Q0.8 11.2 0.8 8.3Q0.8 5.6 3.8 5.4Q4.8 1 9 1Q12.6 1 13.6 4.6Q17.2 4.8 17.2 8Q17.2 11.2 14 11.2Z" fill="url(#cl)" stroke="#262626" stroke-width="1.1"/></svg>
<svg class="a" style="left:1179px;top:736px" width="18" height="15" viewBox="0 0 18 15"><path d="M1 5.5Q9 -1.5 17 5.5M3.5 8.2Q9 3.5 14.5 8.2M6 10.8Q9 8.4 12 10.8" fill="none" stroke="#1a1a1a" stroke-width="1.3" stroke-linecap="round"/><circle cx="9" cy="13.5" r="1.3" fill="#1a1a1a"/></svg>
<svg class="a" style="left:1203px;top:736px" width="18" height="16" viewBox="0 0 18 16"><path d="M1 5.5H4L8 2V14L4 10.5H1Z" fill="none" stroke="#1a1a1a" stroke-width="1.1" stroke-linejoin="round"/><path d="M10.5 5.5Q12 8 10.5 10.5M12.8 3.5Q15.5 8 12.8 12.5M15 1.5Q18.8 8 15 14.5" fill="none" stroke="#1a1a1a" stroke-width="1.1" stroke-linecap="round"/></svg>
<svg class="a" style="left:1227px;top:735px" width="18" height="16" viewBox="0 0 18 16"><rect x="1" y="4.5" width="13.5" height="9" rx="1.5" fill="none" stroke="#1a1a1a" stroke-width="1.2"/><rect x="14.5" y="7" width="2" height="4" fill="#1a1a1a"/><rect x="2.8" y="6.3" width="10" height="5.4" fill="#1a1a1a"/><path d="M4 0.5L1.5 4.5H4.5L3 8" fill="none" stroke="#1a1a1a" stroke-width="1.1"/></svg>
<div class="a" style="left:1180px;top:730px;width:143.5px;text-align:right;font-size:12px;line-height:15px;color:#1a1a1a;white-space:nowrap;letter-spacing:-0.2px">4:13 PM</div>
<div class="a" style="left:1180px;top:746px;width:143.5px;text-align:right;font-size:12.5px;line-height:15px;color:#1a1a1a;white-space:nowrap">11/19/2023</div>
<svg class="a" style="left:1331px;top:736px" width="15" height="16" viewBox="0 0 15 16"><path d="M2 12.2V7Q2 1.5 7.5 1.5Q13 1.5 13 7V12.2L14 13H1Z" fill="none" stroke="#1a1a1a" stroke-width="1.1" stroke-linejoin="round"/><path d="M5.5 14Q7.5 16 9.5 14" fill="none" stroke="#1a1a1a" stroke-width="1.1"/></svg>

</body></html>
